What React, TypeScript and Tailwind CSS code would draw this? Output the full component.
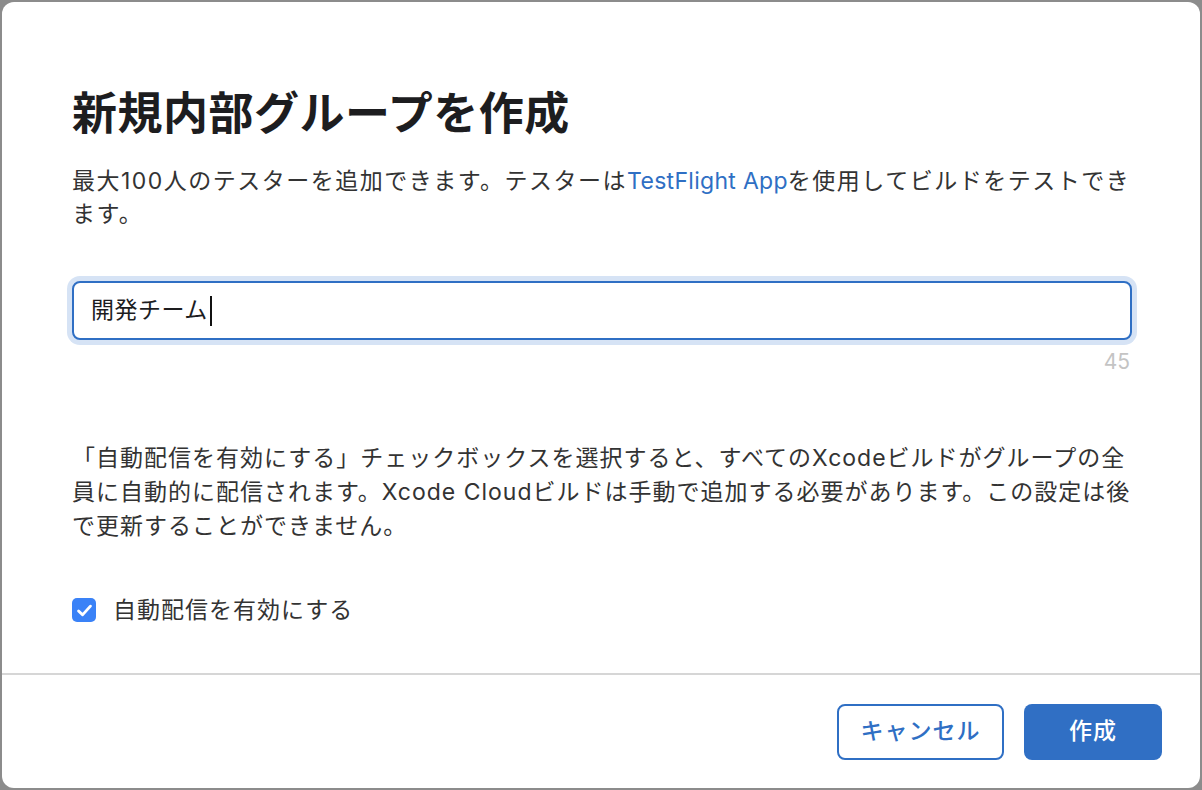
import { useState } from 'react';

// New internal tester group dialog
export default function App() {
  const [name] = useState('開発チーム');
  const [autoDist, setAutoDist] = useState(true);
  const remaining = 50 - name.length;

  return (
    <div
      className="w-[1202px] h-[790px] bg-[#8c8c8c] p-[2px] flex"
      style={{ fontFamily: 'Inter, "Noto Sans CJK JP", sans-serif' }}
    >
      <div className="flex-1 bg-white rounded-[12px] flex flex-col overflow-hidden">
        {/* Body */}
        <div className="flex-1 pl-[70px] pr-[68px] pt-[84px]">
          <h1 className="text-[45px] leading-[56px] font-bold text-[#1d1d1f] tracking-[0.5px]">
            新規内部グループを作成
          </h1>
          <p className="mt-[23px] text-[23px] leading-[33px] text-[#333] tracking-[1.5px]">
            最大100人のテスターを追加できます。テスターは
            <a className="text-[#2f6fc4] tracking-[0.3px]">TestFlight App</a>
            を使用してビルドをテストできます。
          </p>

          <div className="mt-[50px]">
            <div className="h-[59px] rounded-[8px] border-2 border-[#2f6fc4] bg-white shadow-[0_0_0_5px_#d6e3f5] px-[17px] flex items-center">
              <span className="text-[23px] text-[#1d1d1f] tracking-[0.5px]">{name}</span>
              <span className="ml-[2px] w-[2px] h-[30px] bg-[#111]" />
            </div>
            <div className="mt-[8px] text-right text-[21px] leading-[28px] text-[#c4c4c4] pr-[2px]">
              {remaining}
            </div>
          </div>

          <p className="mt-[65px] text-[23px] leading-[34px] text-[#333] tracking-[1px]">
            「自動配信を有効にする」チェックボックスを選択すると、すべてのXcodeビルドがグループの全員に自動的に配信されます。Xcode Cloudビルドは手動で追加する必要があります。この設定は後で更新することができません。
          </p>

          <label className="mt-[50px] flex items-center gap-[17px] cursor-pointer">
            <button
              onClick={() => setAutoDist(!autoDist)}
              className={
                autoDist
                  ? 'w-[24px] h-[24px] rounded-[5px] bg-[#3a82f7] flex items-center justify-center'
                  : 'w-[24px] h-[24px] rounded-[5px] border-2 border-[#999] bg-white'
              }
            >
              {autoDist && (
                <svg viewBox="0 0 24 24" className="w-[19px] h-[19px]" fill="none">
                  <path
                    d="M4.5 12.5l5 5L19.5 6.5"
                    stroke="white"
                    strokeWidth={3.6}
                    strokeLinecap="round"
                    strokeLinejoin="round"
                  />
                </svg>
              )}
            </button>
            <span className="text-[23px] text-[#333] tracking-[1px]">自動配信を有効にする</span>
          </label>
        </div>

        {/* Footer */}
        <div className="border-t-2 border-[#d6d6d6] h-[115px] flex items-center justify-end gap-[20px] pr-[38px]">
          <button className="w-[167px] h-[56px] rounded-[8px] border-2 border-[#2f6fc4] text-[#2f6fc4] text-[23px] font-medium tracking-[1px]">
            キャンセル
          </button>
          <button className="w-[138px] h-[56px] rounded-[8px] bg-[#306fc4] text-white text-[23px] font-medium tracking-[1px]">
            作成
          </button>
        </div>
      </div>
    </div>
  );
}
